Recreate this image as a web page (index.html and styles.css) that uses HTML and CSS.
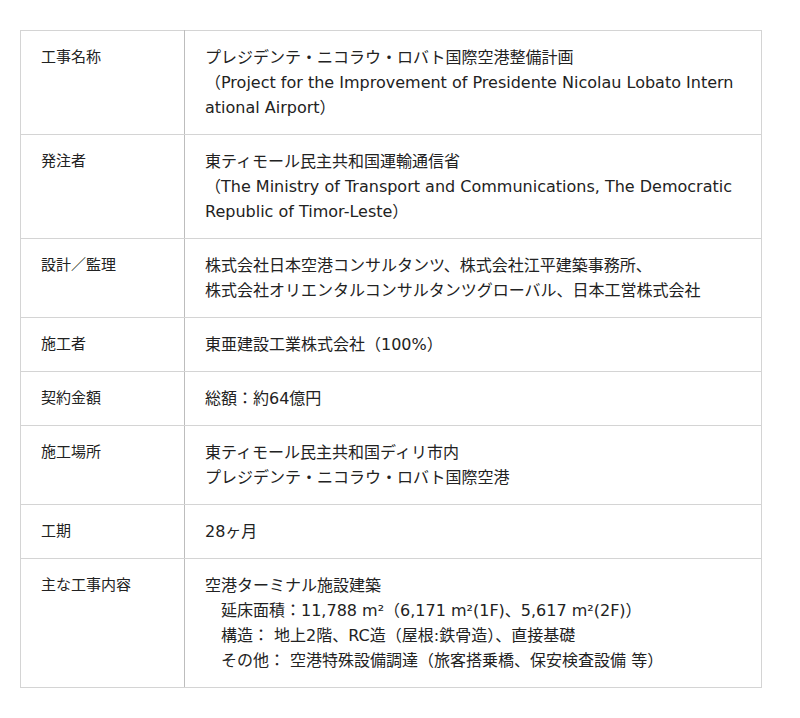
FILE: index.html
```html
<!DOCTYPE html>
<html lang="ja">
<head>
<meta charset="utf-8">
<title>工事概要</title>
<link rel="stylesheet" href="styles.css">
</head>
<body>
<table class="spec">
  <tr>
    <th class="label">工事名称</th>
    <td class="value">プレジデンテ・ニコラウ・ロバト国際空港整備計画<br>（Project for the Improvement of Presidente Nicolau Lobato International Airport）</td>
  </tr>
  <tr>
    <th class="label">発注者</th>
    <td class="value">東ティモール民主共和国運輸通信省<br>（The Ministry of Transport and Communications, The Democratic Republic of Timor-Leste）</td>
  </tr>
  <tr>
    <th class="label">設計／監理</th>
    <td class="value">株式会社日本空港コンサルタンツ、株式会社江平建築事務所、<br>株式会社オリエンタルコンサルタンツグローバル、日本工営株式会社</td>
  </tr>
  <tr>
    <th class="label">施工者</th>
    <td class="value">東亜建設工業株式会社（100%）</td>
  </tr>
  <tr>
    <th class="label">契約金額</th>
    <td class="value">総額：約64億円</td>
  </tr>
  <tr>
    <th class="label">施工場所</th>
    <td class="value">東ティモール民主共和国ディリ市内<br>プレジデンテ・ニコラウ・ロバト国際空港</td>
  </tr>
  <tr>
    <th class="label">工期</th>
    <td class="value">28ヶ月</td>
  </tr>
  <tr>
    <th class="label">主な工事内容</th>
    <td class="value">空港ターミナル施設建築<br>　延床面積：11,788 m²（6,171 m²(1F)、5,617 m²(2F)）<br>　構造： 地上2階、RC造（屋根:鉄骨造）、直接基礎<br>　その他： 空港特殊設備調達（旅客搭乗橋、保安検査設備 等）</td>
  </tr>
</table>
</body>
</html>
```

FILE: styles.css
```css
html, body {
  margin: 0;
  padding: 0;
  background: #fff;
}

body {
  font-family: "DejaVu Sans", "Noto Sans CJK JP", sans-serif;
  font-size: 15px;
  line-height: 25px;
  color: #222;
}

.spec {
  margin: 30px 20px;
  width: 742px;
  border-collapse: collapse;
  table-layout: fixed;
}

.spec th,
.spec td {
  border: 1px solid #d4d4d4;
  padding: 14px 20px;
  vertical-align: top;
  text-align: left;
  font-weight: normal;
}

.spec .label {
  width: 123px;
  font-size: 15px;
  border-right-color: #bdbdbd;
}

.spec .value {
  font-size: 16px;
  word-break: break-all;
}
```
